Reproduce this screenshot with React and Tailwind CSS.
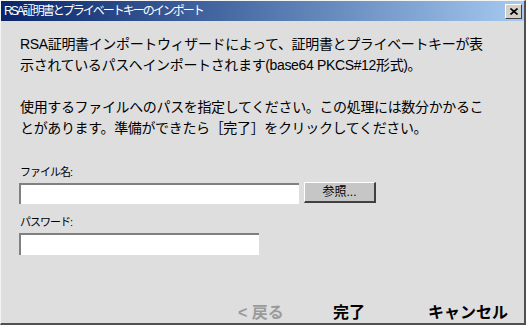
export default function App() {
  const jp = { fontFamily: '"Liberation Sans", "Noto Sans CJK JP", sans-serif' };
  return (
    <div className="w-[526px] h-[325px] bg-[#dedede] border-t border-l border-[#f4f4f4] border-r-2 border-b-2 border-r-[#505050] border-b-[#505050] flex flex-col" style={jp}>
      <div className="h-[20px] flex items-center justify-between bg-gradient-to-r from-[#0a246a] to-[#a6caf0] pl-[3px] pr-[2px]">
        <span className="text-white text-[12px] tracking-[-2px] leading-none">RSA証明書とプライベートキーのインポート</span>
        <div className="w-[17px] h-[15px] bg-[#d4d0c8] border border-t-white border-l-white border-r-[#404040] border-b-[#404040] flex items-center justify-center">
          <svg width="8" height="7" viewBox="0 0 8 7">
            <path d="M0.5 0.5 L7.5 6.5 M7.5 0.5 L0.5 6.5" stroke="black" strokeWidth="1.6" />
          </svg>
        </div>
      </div>
      <div className="flex flex-col pl-[19px] pt-[13px] text-black">
        <div className="text-[14px] leading-[21px] tracking-[-0.35px]">
          <p>RSA証明書インポートウィザードによって、証明書とプライベートキーが表</p>
          <p>示されているパスへインポートされます(base64 PKCS#12形式)。</p>
          <p className="h-[21px]"></p>
          <p>使用するファイルへのパスを指定してください。この処理には数分かかるこ</p>
          <p>とがあります。準備ができたら［完了］をクリックしてください。</p>
        </div>
        <div className="mt-[26px] -ml-px flex flex-col">
          <span className="text-[11px] leading-[14px] tracking-[-1px] ml-[1px]">ファイル名:</span>
          <div className="mt-[4px] flex items-center">
            <div className="w-[280px] h-[21px] bg-white border-t-2 border-l-2 border-[#808080]"></div>
            <div className="ml-[5px] -mt-[2px] w-[72px] h-[21px] bg-[#c6c6c6] border border-t-white border-l-white border-r-2 border-b-2 border-r-[#404040] border-b-[#404040] flex items-center justify-center text-[12px] leading-none">参照...</div>
          </div>
          <span className="mt-[11px] text-[11px] leading-[14px] tracking-[-1px] ml-[1px]">パスワード:</span>
          <div className="mt-[4px] w-[240px] h-[22px] bg-white border-t-2 border-l-2 border-[#808080]"></div>
        </div>
      </div>
      <div className="mt-auto flex pl-[237px] text-[16px] font-bold leading-[20px]">
        <span className="w-[95px] text-[#9a9a9a]">&lt; 戻る</span>
        <span className="w-[95px]">完了</span>
        <span className="w-[95px]">キャンセル</span>
      </div>
    </div>
  );
}
